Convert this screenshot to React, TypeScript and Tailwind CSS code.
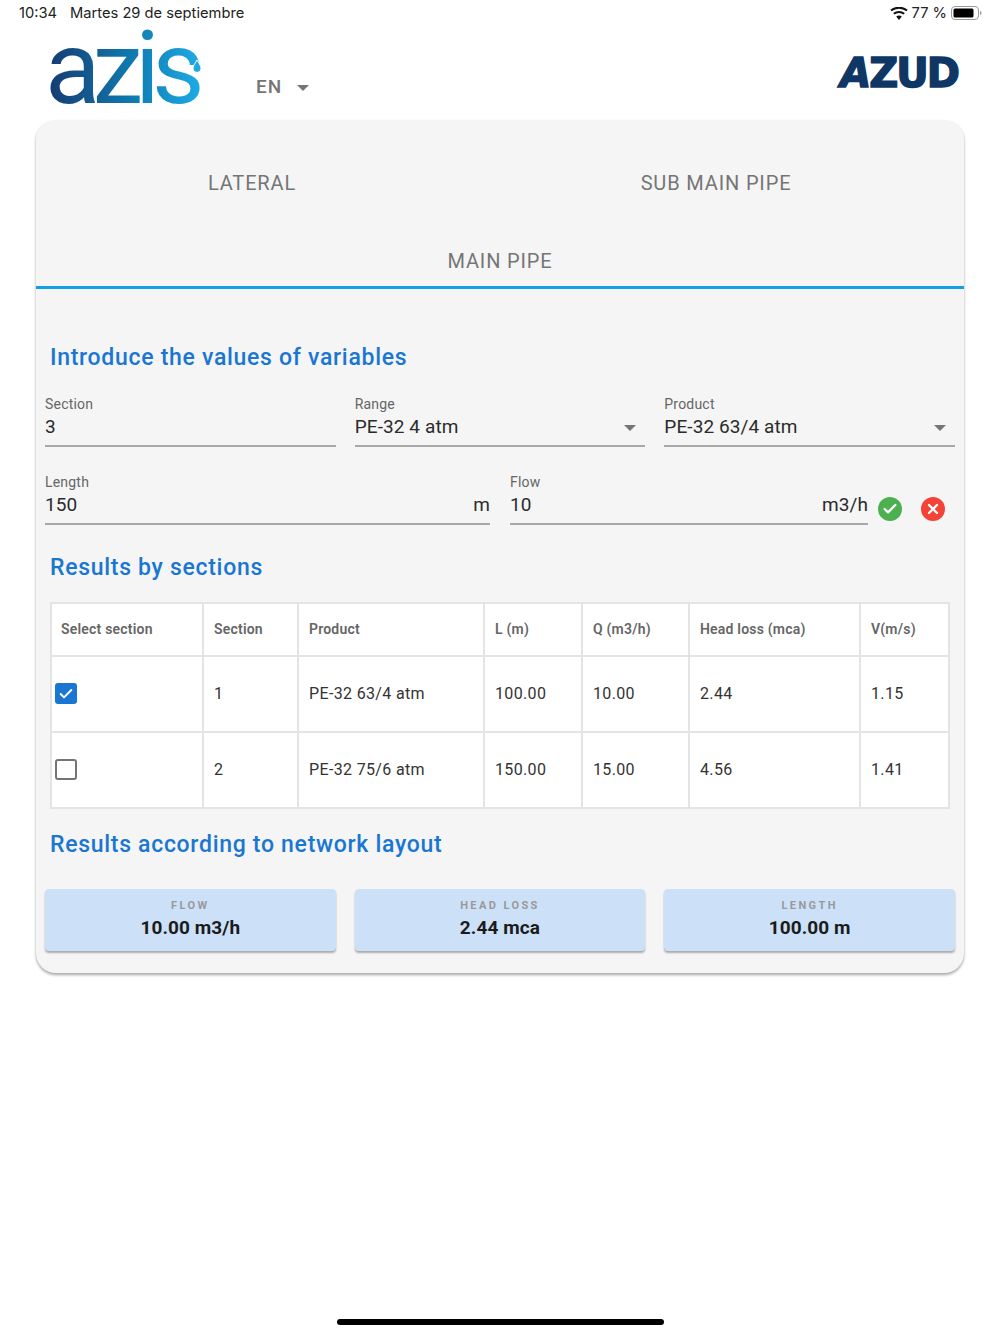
import { Check, X } from 'lucide-react';

const rows = [
  { checked: true, section: '1', product: 'PE-32 63/4 atm', l: '100.00', q: '10.00', loss: '2.44', v: '1.15' },
  { checked: false, section: '2', product: 'PE-32 75/6 atm', l: '150.00', q: '15.00', loss: '4.56', v: '1.41' },
];

const stats = [
  { label: 'FLOW', value: '10.00 m3/h' },
  { label: 'HEAD LOSS', value: '2.44 mca' },
  { label: 'LENGTH', value: '100.00 m' },
];

function Caret({ className }: { className: string }) {
  return (
    <svg className={className} width="12" height="6" viewBox="0 0 12 6">
      <path d="M0 0h12L6 6z" fill="#757575" />
    </svg>
  );
}

function Field({ label, value, unit, select, className }: { label: string; value: string; unit?: string; select?: boolean; className: string }) {
  return (
    <div className={className}>
      <div className="h-[17px] text-[14px] leading-[17px] tracking-[0.2px] text-[#666]">{label}</div>
      <div className="flex h-[34px] items-center justify-between border-b-2 border-[#a8a8a8] pb-[3px] text-[19px] tracking-[0.1px] text-[#2b2b2b]">
        <span>{value}</span>
        {unit && <span>{unit}</span>}
        {select && <Caret className="mr-[9px]" />}
      </div>
    </div>
  );
}

function Heading({ children, className }: { children: string; className: string }) {
  return <h2 className={`ml-[5px] text-[23px] leading-[30px] font-medium tracking-[0.7px] text-[#1976d2] ${className}`}>{children}</h2>;
}

export default function App() {
  return (
    <div className="flex min-h-[1334px] flex-col bg-white font-['Roboto',sans-serif]">
      {/* Status bar */}
      <div className="flex h-[27px] items-center justify-between pr-[17px] pl-[19px] font-['Inter',sans-serif] text-[14.7px] text-[#222]">
        <div className="flex gap-[13px]">
          <span>10:34</span>
          <span>Martes 29 de septiembre</span>
        </div>
        <div className="flex items-center gap-[4px]">
          <svg width="18" height="13" viewBox="0 0 18 13">
            <path d="M9 13 6.2 9.6a4.4 4.4 0 0 1 5.6 0z" fill="#111" />
            <path d="M3.8 6.8a8 8 0 0 1 10.4 0M1 3.6a12.4 12.4 0 0 1 16 0" fill="none" stroke="#111" strokeWidth="2" />
          </svg>
          <span>77 %</span>
          <svg width="32" height="14" viewBox="0 0 32 14">
            <rect x="0.5" y="0.5" width="27" height="13" rx="3.5" fill="none" stroke="#999" />
            <rect x="2.5" y="2.5" width="20" height="9" rx="1.5" fill="#000" />
            <path d="M29 5c1 .2 1.500 1 1.500 2s-.5 1.800-1.500 2z" fill="#999" />
          </svg>
        </div>
      </div>

      {/* Logos */}
      <div className="flex h-[93px] items-start justify-between pr-[42px] pl-[45px]">
        <div className="flex items-start">
          <div className="relative h-[93px] w-[211px]">
            <span className="inline-block w-[162px] bg-gradient-to-r from-[#14396f] via-[#0e76ac] to-[#1fb0ea] bg-clip-text font-['Roboto',sans-serif] text-[102px] leading-[82px] font-normal tracking-[-8px] text-transparent">azis</span>
            <svg className="absolute top-[32px] left-[147px]" width="10" height="14" viewBox="0 0 10 14">
              <path d="M5 1C3.500 4 1 6.500 1 9.500a4 4 0 0 0 8 0C9 6.500 6.500 4 5 1z" fill="#1fa8e4" stroke="#fff" strokeWidth="1" />
            </svg>
          </div>
          <div className="mt-[50px] flex items-center text-[19px] leading-[20px] font-medium tracking-[1px] text-[#757575]">
            EN
            <Caret className="mt-[2px] ml-[15px]" />
          </div>
        </div>
        <span className="mt-[21px] font-['DejaVu_Sans',sans-serif] text-[40px] leading-[50px] font-bold tracking-[-2px] text-[#0f3765] [-webkit-text-stroke:1.5px_#0f3765]">
          <span className="italic">A</span>ZUD
        </span>
      </div>

      {/* Card */}
      <div className="mx-[36px] h-[853px] rounded-[20px] bg-[#f5f5f5] pt-[24px] shadow-[0_2px_3px_rgba(0,0,0,0.35)]">
        <div className="grid h-[145px] grid-cols-[432px_496px] border-b-[3px] border-[#14a0e6] text-[20px] tracking-[0.85px] text-[#757575]">
          <div className="flex h-[78px] items-center justify-center">LATERAL</div>
          <div className="flex h-[78px] items-center justify-center">SUB MAIN PIPE</div>
          <div className="col-span-2 flex h-[64px] items-start justify-center pt-[26px] leading-[26px]">MAIN PIPE</div>
        </div>

        <div className="px-[9px]">
          <Heading className="mt-[54px]">Introduce the values of variables</Heading>

          <div className="mt-[23px] grid grid-cols-3 gap-x-[19px]">
            <Field label="Section" value="3" className="" />
            <Field label="Range" value="PE-32 4 atm" select className="" />
            <Field label="Product" value="PE-32 63/4 atm" select className="" />
          </div>

          <div className="mt-[27px] flex">
            <Field label="Length" value="150" unit="m" className="w-[445px]" />
            <Field label="Flow" value="10" unit="m3/h" className="ml-[20px] w-[358px]" />
            <div className="ml-[10px] flex items-end gap-[19px]">
              <span className="mb-[4px] flex h-[24px] w-[24px] items-center justify-center rounded-full bg-[#4caf50]">
                <Check size={16} strokeWidth={3.5} color="#fff" />
              </span>
              <span className="mb-[4px] flex h-[24px] w-[24px] items-center justify-center rounded-full bg-[#f44336]">
                <X size={16} strokeWidth={3.5} color="#fff" />
              </span>
            </div>
          </div>

          <Heading className="mt-[28px]">Results by sections</Heading>

          <table className="mt-[19px] ml-[5px] w-[898px] table-fixed border-collapse bg-white text-[16px] tracking-[0.35px] text-[#333]">
            <colgroup>
              <col className="w-[152px]" />
              <col className="w-[95px]" />
              <col className="w-[186px]" />
              <col className="w-[98px]" />
              <col className="w-[107px]" />
              <col className="w-[171px]" />
              <col className="w-[89px]" />
            </colgroup>
            <thead>
              <tr className="h-[53px] text-left text-[14px] tracking-[0.2px] text-[#666]">
                {['Select section', 'Section', 'Product', 'L (m)', 'Q (m3/h)', 'Head loss (mca)', 'V(m/s)'].map((title) => (
                  <th key={title} className="border-2 border-[#e4e4e4] pl-[10px] font-semibold first:pl-[9px]">{title}</th>
                ))}
              </tr>
            </thead>
            <tbody>
              {rows.map((row) => (
                <tr key={row.section} className="h-[76px]">
                  <td className="border-2 border-[#e4e4e4] pl-[3px]">
                    {row.checked ? (
                      <span className="-mt-[1px] flex h-[21px] w-[22px] items-center justify-center rounded-[3px] bg-[#1976d2]">
                        <Check size={16} strokeWidth={3} color="#fff" />
                      </span>
                    ) : (
                      <span className="-mt-[1px] block h-[21px] w-[22px] rounded-[3px] border-2 border-[#757575]" />
                    )}
                  </td>
                  {[row.section, row.product, row.l, row.q, row.loss, row.v].map((cell, i) => (
                    <td key={i} className="border-2 border-[#e4e4e4] pl-[10px]">{cell}</td>
                  ))}
                </tr>
              ))}
            </tbody>
          </table>

          <Heading className="mt-[21px]">Results according to network layout</Heading>

          <div className="mt-[29px] grid grid-cols-3 gap-x-[19px]">
            {stats.map((stat) => (
              <div key={stat.label} className="flex h-[62px] flex-col items-center rounded-[4px] bg-[#cce1f8] pt-[10px] shadow-[0_2px_2px_rgba(0,0,0,0.3)]">
                <div className="text-[11px] leading-[14px] font-bold tracking-[2.4px] text-[#999]">{stat.label}</div>
                <div className="mt-[3px] text-[19px] leading-[24px] font-bold tracking-[0.1px] text-[#1b1b1b]">{stat.value}</div>
              </div>
            ))}
          </div>
        </div>
      </div>

      {/* Home indicator */}
      <div className="mx-auto mt-auto mb-[9px] h-[6px] w-[327px] rounded-full bg-black" />
    </div>
  );
}
